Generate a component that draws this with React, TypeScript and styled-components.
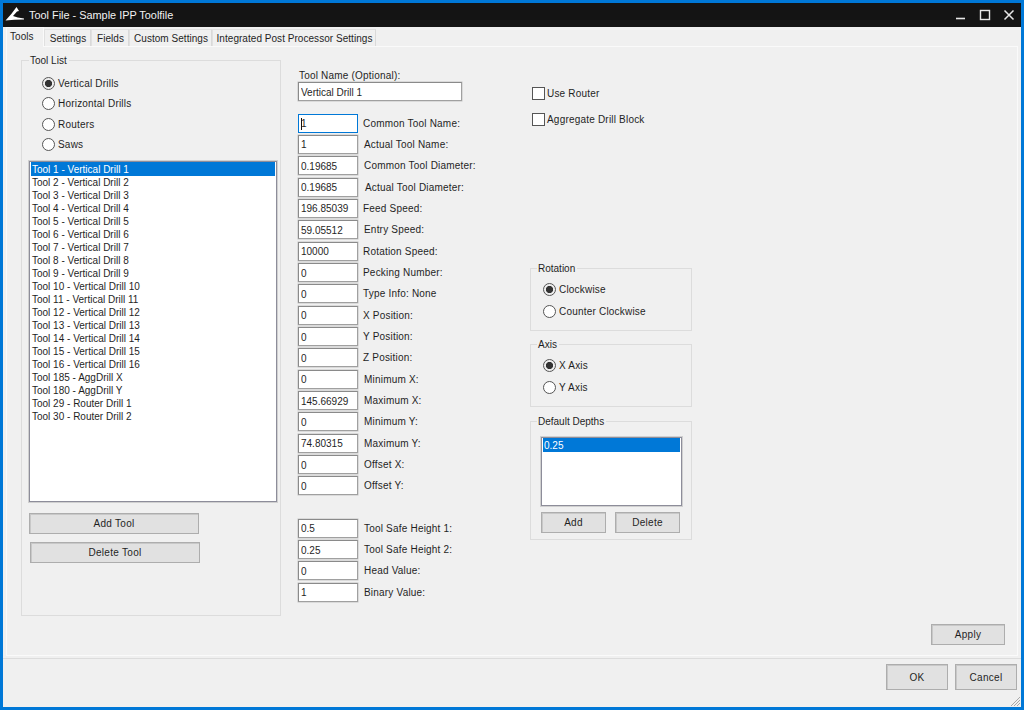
import React from "react";
import styled, { createGlobalStyle } from "styled-components";

const Global = createGlobalStyle`
  html, body { margin: 0; padding: 0; background: #0078d7; }
  body { font-family: "Liberation Sans", Arial, sans-serif; font-size: 10px; color: #1f1f1f; }
  * { box-sizing: border-box; }
`;

const Frame = styled.div`
  position: relative;
  width: 1024px;
  height: 710px;
  padding: 3px;
  background: #0078d7;
  display: flex;
  flex-direction: column;
  overflow: hidden;
`;

const TitleBar = styled.div`
  height: 24px;
  flex: none;
  background: #141414;
  color: #f2f2f2;
  display: flex;
  align-items: center;
  padding-left: 2px;
`;

const Logo = styled.svg`
  width: 22px;
  height: 18px;
  flex: none;
  margin-right: 2px;
`;

const TitleText = styled.span`
  flex: 1;
  font-size: 10.9px;
`;

const WindowButtons = styled.div`
  display: flex;
  align-items: center;
  height: 100%;
`;

const WindowButton = styled.svg`
  width: 24px;
  height: 12px;
  flex: none;
`;

const Body = styled.div`
  flex: 1;
  display: flex;
  flex-direction: column;
  background: #f0f0f0;
`;

const TabStrip = styled.div`
  height: 19px;
  flex: none;
  display: flex;
  align-items: flex-end;
  padding-left: 3px;
`;

const Tab = styled.div<{ $active?: boolean; $width: number }>`
  width: ${(p) => p.$width}px;
  height: ${(p) => (p.$active ? 20 : 17)}px;
  flex: none;
  text-align: ${(p) => (p.$active ? "left" : "center")};
  padding: ${(p) => (p.$active ? "2px 0 0 3px" : "2px 0 0 1px")};
  line-height: 13px;
  letter-spacing: 0.04px;
  white-space: nowrap;
  background: #f0f0f0;
  border-top: 1px solid ${(p) => (p.$active ? "#fafafa" : "#e0e0e0")};
  border-left: 1px solid ${(p) => (p.$active ? "#fafafa" : "#e0e0e0")};
  border-right: 1px solid ${(p) => (p.$active ? "#fafafa" : "#d9d9d9")};
  margin-bottom: ${(p) => (p.$active ? -1 : 0)}px;
  position: relative;
  z-index: ${(p) => (p.$active ? 1 : 0)};
`;

const TabPage = styled.div`
  width: 1012px;
  height: 610px;
  margin-left: 3px;
  flex: none;
  border: 1px solid #fafafa;
  padding: 7px 12px 0 14px;
  display: flex;
  flex-direction: column;
`;

const Columns = styled.div`
  height: 562px;
  flex: none;
  display: flex;
  align-items: flex-start;
`;

const Group = styled.fieldset<{ $width: number; $height: number; $gap?: number }>`
  width: ${(p) => p.$width}px;
  height: ${(p) => p.$height}px;
  margin: 0 0 ${(p) => p.$gap ?? 0}px 0;
  padding: 0;
  flex: none;
  border: 1px solid #dcdcdc;
  min-width: 0;
`;

const Legend = styled.legend<{ $left?: number }>`
  margin-left: ${(p) => p.$left ?? 6}px;
  padding: 0 2px 0 1px;
  line-height: 13px;
`;

const ToolGroup = styled(Group)`
  padding: 0 7px 0 7px;
`;

const RadioStack = styled.div<{ $pitch: number; $left: number; $top: number }>`
  display: grid;
  grid-auto-rows: ${(p) => p.$pitch}px;
  padding: ${(p) => p.$top}px 0 0 ${(p) => p.$left}px;
`;

const RadioRow = styled.label`
  display: flex;
  align-items: center;
  gap: 3px;
  letter-spacing: 0.2px;
`;

const Radio = styled.input.attrs({ type: "radio" })`
  appearance: none;
  width: 13px;
  height: 13px;
  margin: 0;
  flex: none;
  border: 1px solid #555;
  border-radius: 50%;
  background: #fff;
  &:checked {
    background: radial-gradient(circle, #333 3.2px, #eee 4px);
  }
`;

const ListBox = styled.div<{ $height: number }>`
  height: ${(p) => p.$height}px;
  background: #fff;
  border: 1px solid #8d8d9a;
  box-shadow: 0 0 0 1px #d0d0d0;
  padding: 1px 1px 0;
`;

const ListItem = styled.div<{ $selected?: boolean }>`
  height: 13px;
  line-height: 13px;
  padding-left: 1px;
  white-space: nowrap;
  background: ${(p) => (p.$selected ? "#0078d7" : "transparent")};
  box-shadow: ${(p) => (p.$selected ? "0 -1px 0 #0078d7" : "none")};
  color: ${(p) => (p.$selected ? "#fff" : "#1f1f1f")};
`;

const ToolListBox = styled(ListBox)`
  margin: 6px 0 0 0;
  width: 248px;
`;

const Button = styled.button<{ $width: number; $height?: number }>`
  width: ${(p) => p.$width}px;
  height: ${(p) => p.$height ?? 21}px;
  flex: none;
  margin: 0;
  padding: 0;
  background: #e1e1e1;
  border: 1px solid #adadad;
  box-shadow: inset 1px 1px 0 #c8c8c8;
  font: inherit;
  letter-spacing: 0.3px;
  color: #1f1f1f;
`;

const ToolButtons = styled.div`
  display: grid;
  grid-template-rows: 21px 21px;
  row-gap: 8px;
  padding: 11px 0 0 0;
`;

const ShiftedButton = styled(Button)`
  margin-left: 1px;
`;

const Middle = styled.div`
  width: 168px;
  margin-left: 16px;
  flex: none;
  padding: 15px 0 0 1px;
`;

const NameLabel = styled.div`
  line-height: 13px;
  padding-left: 1px;
  letter-spacing: 0.2px;
`;

const TextField = styled.input<{ $focused?: boolean }>`
  display: block;
  margin: 0;
  height: 19px;
  padding: 1px 2px 0;
  font: inherit;
  color: #1f1f1f;
  outline: none;
  border: 1px solid ${(p) => (p.$focused ? "#0078d7" : "#a0a0a0")};
  border-top-color: ${(p) => (p.$focused ? "#0078d7" : "#8a8a8a")};
  border-left-color: ${(p) => (p.$focused ? "#0078d7" : "#8a8a8a")};
  box-shadow: ${(p) => (p.$focused ? "none" : "0 0 0 0.5px #c4c4c4")};
  background: ${(p) =>
    p.$focused
      ? "linear-gradient(#111, #111) 2px 3px / 1px 12px no-repeat, #fff"
      : "#fff"};
`;

const NameField = styled(TextField)`
  width: 164px;
`;

const FieldGrid = styled.div<{ $top: number }>`
  display: grid;
  grid-auto-rows: 21.35px;
  margin-top: ${(p) => p.$top}px;
`;

const FieldRow = styled.div`
  display: flex;
  align-items: flex-start;
`;

const NumberField = styled(TextField)`
  width: 60px;
  flex: none;
`;

const FieldLabel = styled.span<{ $inset: number }>`
  line-height: 13px;
  margin-top: 3px;
  padding-left: ${(p) => 5 + p.$inset}px;
  white-space: nowrap;
  letter-spacing: 0.2px;
`;

const RightColumn = styled.div`
  width: 162px;
  margin-left: 65px;
  flex: none;
  display: flex;
  flex-direction: column;
`;

const CheckStack = styled.div`
  display: grid;
  grid-template-rows: 26px 26px;
  padding: 33px 0 0 2px;
  height: 208px;
`;

const CheckRow = styled.label`
  display: flex;
  align-items: center;
  gap: 2px;
  height: 13px;
  letter-spacing: 0.2px;
`;

const CheckBox = styled.input.attrs({ type: "checkbox" })`
  appearance: none;
  width: 13px;
  height: 13px;
  margin: 0;
  flex: none;
  background: #fff;
  border: 1px solid #555;
`;

const DepthList = styled(ListBox)`
  width: 141px;
  margin: 9px 0 0 10px;
`;

const DepthButtons = styled.div`
  display: flex;
  gap: 9px;
  padding: 6px 0 0 10px;
`;

const ApplyRow = styled.div`
  display: flex;
  justify-content: flex-end;
  padding-top: 8px;
`;

const Footer = styled.div`
  flex: 1;
  border-top: 1px solid #dcdcdc;
  margin-top: 2px;
  display: flex;
  justify-content: flex-end;
  gap: 7px;
  padding: 5px 4px 0 0;
`;

const Grip = styled.svg`
  position: absolute;
  right: 3px;
  bottom: 3px;
  width: 12px;
  height: 12px;
`;

const tools = [
  ...Array.from({ length: 16 }, (_, i) => `Tool ${i + 1} - Vertical Drill ${i + 1}`),
  "Tool 185 - AggDrill X",
  "Tool 180 - AggDrill Y",
  "Tool 29 - Router Drill 1",
  "Tool 30 - Router Drill 2",
];

const mainFields: [string, string, number][] = [
  ["Common Tool Name:", "1", 0],
  ["Actual Tool Name:", "1", 1],
  ["Common Tool Diameter:", "0.19685", 1],
  ["Actual Tool Diameter:", "0.19685", 2],
  ["Feed Speed:", "196.85039", 0],
  ["Entry Speed:", "59.05512", 1],
  ["Rotation Speed:", "10000", 0],
  ["Pecking Number:", "0", 0],
  ["Type Info: None", "0", 0],
  ["X Position:", "0", 0],
  ["Y Position:", "0", 0],
  ["Z Position:", "0", 0],
  ["Minimum X:", "0", 1],
  ["Maximum X:", "145.66929", 1],
  ["Minimum Y:", "0", 1],
  ["Maximum Y:", "74.80315", 1],
  ["Offset X:", "0", 1],
  ["Offset Y:", "0", 1],
];

const extraFields: [string, string, number][] = [
  ["Tool Safe Height 1:", "0.5", 1],
  ["Tool Safe Height 2:", "0.25", 1],
  ["Head Value:", "0", 1],
  ["Binary Value:", "1", 1],
];

function Fields({ rows, top }: { rows: [string, string, number][]; top: number }) {
  return (
    <FieldGrid $top={top}>
      {rows.map(([label, value, inset]) => (
        <FieldRow key={label}>
          <NumberField defaultValue={value} $focused={label === "Common Tool Name:"} />
          <FieldLabel $inset={inset}>{label}</FieldLabel>
        </FieldRow>
      ))}
    </FieldGrid>
  );
}

function RadioGroup({
  name,
  options,
  pitch,
  left,
  top,
}: {
  name: string;
  options: string[];
  pitch: number;
  left: number;
  top: number;
}) {
  return (
    <RadioStack $pitch={pitch} $left={left} $top={top}>
      {options.map((o, i) => (
        <RadioRow key={o}>
          <Radio name={name} defaultChecked={i === 0} />
          {o}
        </RadioRow>
      ))}
    </RadioStack>
  );
}

export default function App() {
  return (
    <Frame>
      <Global />
      <TitleBar>
        <Logo viewBox="0 0 22 18">
          <path
            d="M11.5 1 L14 5 L12 5.5 L8 10 Q12 11.5 19 12.6 L19 13.4 Q9 13.5 0.5 14.6 Q6 9 11.5 1 Z"
            fill="#fff"
          />
        </Logo>
        <TitleText>Tool File - Sample IPP Toolfile</TitleText>
        <WindowButtons>
          <WindowButton viewBox="0 0 24 12">
            <path d="M7 9.5 H16" stroke="#e8e8e8" strokeWidth="1.6" />
          </WindowButton>
          <WindowButton viewBox="0 0 24 12">
            <rect x="7.5" y="1.5" width="9" height="9" fill="none" stroke="#e8e8e8" strokeWidth="1.4" />
          </WindowButton>
          <WindowButton viewBox="0 0 24 12">
            <path d="M7.5 1.5 L16.5 10.5 M16.5 1.5 L7.5 10.5" stroke="#e8e8e8" strokeWidth="1.5" />
          </WindowButton>
        </WindowButtons>
      </TitleBar>
      <Body>
        <TabStrip>
          <Tab $active $width={38}>Tools</Tab>
          <Tab $width={47}>Settings</Tab>
          <Tab $width={38}>Fields</Tab>
          <Tab $width={83}>Custom Settings</Tab>
          <Tab $width={164}>Integrated Post Processor Settings</Tab>
        </TabStrip>
        <TabPage>
          <Columns>
            <ToolGroup $width={260} $height={562}>
              <Legend $left={0}>Tool List</Legend>
              <RadioGroup
                name="tool"
                options={["Vertical Drills", "Horizontal Drills", "Routers", "Saws"]}
                pitch={20.5}
                left={13}
                top={6}
              />
              <ToolListBox $height={341}>
                {tools.map((t, i) => (
                  <ListItem key={t} $selected={i === 0}>{t}</ListItem>
                ))}
              </ToolListBox>
              <ToolButtons>
                <Button $width={170}>Add Tool</Button>
                <ShiftedButton $width={170}>Delete Tool</ShiftedButton>
              </ToolButtons>
            </ToolGroup>
            <Middle>
              <NameLabel>Tool Name (Optional):</NameLabel>
              <NameField defaultValue="Vertical Drill 1" />
              <Fields rows={mainFields} top={12.6} />
              <Fields rows={extraFields} top={21} />
            </Middle>
            <RightColumn>
              <CheckStack>
                <CheckRow><CheckBox />Use Router</CheckRow>
                <CheckRow><CheckBox />Aggregate Drill Block</CheckRow>
              </CheckStack>
              <Group $width={162} $height={69} $gap={7}>
                <Legend>Rotation</Legend>
                <RadioGroup name="rot" options={["Clockwise", "Counter Clockwise"]} pitch={22} left={12} top={3} />
              </Group>
              <Group $width={162} $height={69} $gap={8}>
                <Legend>Axis</Legend>
                <RadioGroup name="axis" options={["X Axis", "Y Axis"]} pitch={22} left={12} top={3} />
              </Group>
              <Group $width={162} $height={125}>
                <Legend>Default Depths</Legend>
                <DepthList $height={69}>
                  <ListItem $selected>0.25</ListItem>
                </DepthList>
                <DepthButtons>
                  <Button $width={65}>Add</Button>
                  <Button $width={65}>Delete</Button>
                </DepthButtons>
              </Group>
            </RightColumn>
          </Columns>
          <ApplyRow>
            <Button $width={74}>Apply</Button>
          </ApplyRow>
        </TabPage>
        <Footer>
          <Button $width={62} $height={26}>OK</Button>
          <Button $width={62} $height={26}>Cancel</Button>
        </Footer>
      </Body>
      <Grip viewBox="0 0 12 12">
        <path d="M11 2 L2 11 M11 5 L5 11 M11 8 L8 11" stroke="#a8a8a8" strokeWidth="1" />
      </Grip>
    </Frame>
  );
}
